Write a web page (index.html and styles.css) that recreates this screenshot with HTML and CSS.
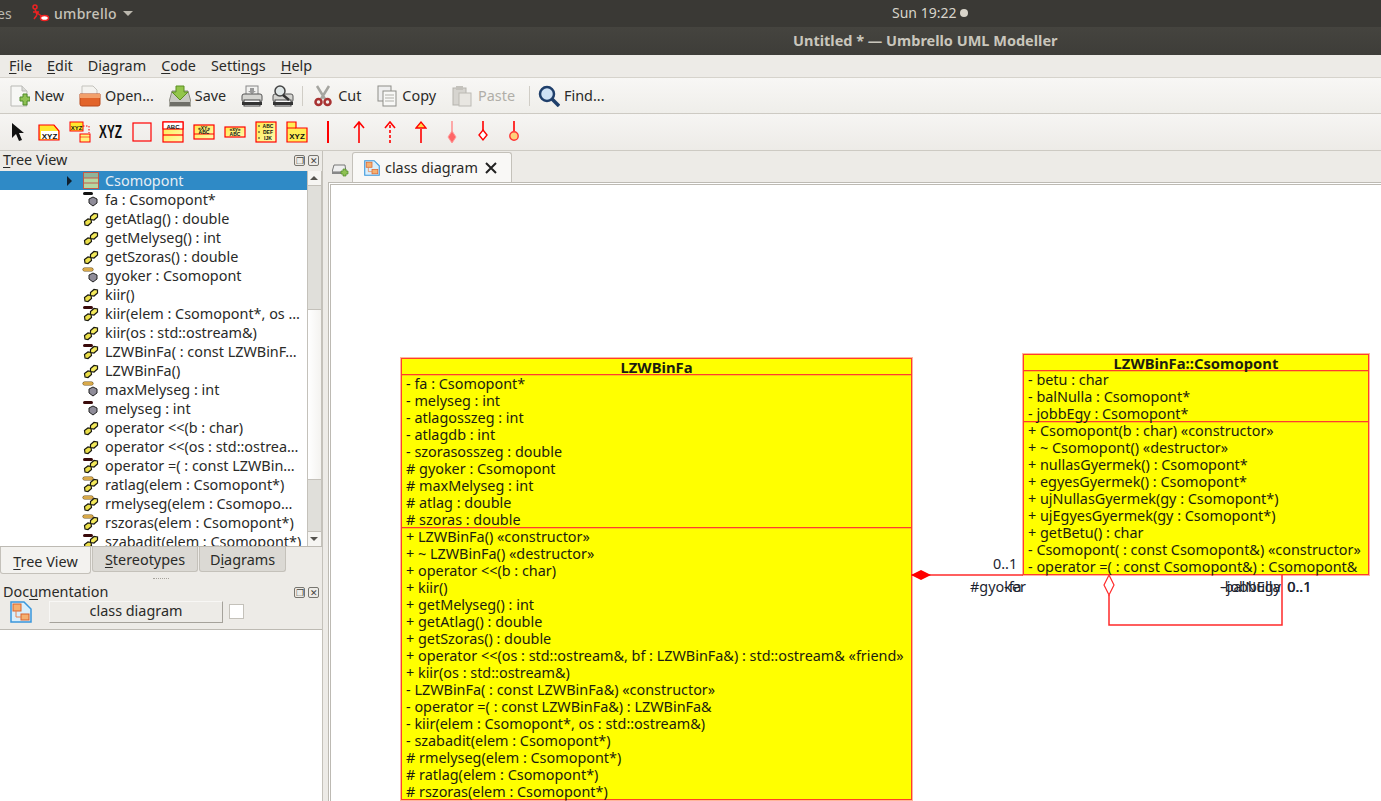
FILE: index.html
```html
<!DOCTYPE html>
<html lang="en">
<head>
  <meta charset="UTF-8" />
  <title>Untitled * — Umbrello UML Modeller</title>
  <link rel="stylesheet" href="styles.css">
</head>
<body>
  <svg class="defs" width="0" height="0">
    <defs>
      <linearGradient id="yel" x1="0" y1="0" x2="1" y2="1"><stop offset="0" stop-color="#ffe94a"/><stop offset="1" stop-color="#fffbb0"/></linearGradient>
      <symbol id="op" viewBox="0 0 16 15">
        <path d="M1.500 9.500l3.500-2.500 3 .5.500 3-3.500 3-3-.5z" fill="#ece04a" stroke="#1a1a10" stroke-width="1.200"/>
        <path d="M7.500 4.500l3.500-3 3.500.5v3l-3.500 3-3.500-.5z" fill="#f4ea5c" stroke="#1a1a10" stroke-width="1.200"/>
      </symbol>
      <symbol id="attr" viewBox="0 0 16 15">
        <path d="M10 4l4 2v4l-4 3-4-3v-4z" fill="#8f8c99" stroke="#222" stroke-width="1"/>
      </symbol>
      <symbol id="clsdiag" viewBox="0 0 22 22">
        <path d="M1 1h13l7 7v13h-20z" fill="#d9eefb" stroke="#3a97dc" stroke-width="1.500"/>
        <rect x="3" y="3" width="8" height="7" fill="#f5b070" stroke="#d9622c"/>
        <rect x="11" y="13" width="8" height="6" fill="#f5b070" stroke="#d9622c"/>
        <path d="M6 10v6h5" fill="none" stroke="#e8824c"/>
      </symbol>
    </defs>
  </svg>

  <div class="panel-top">
    <div class="panel-left">
      <span class="panel-es">es</span>
      <svg class="panel-app" width="18" height="18" viewBox="0 0 18 18"><circle cx="3" cy="3" r="2" fill="none" stroke="#e22" stroke-width="1.500"/><path d="M3 5l2 6M1 8h6M5 11l-3 4M5 9l6 4" stroke="#e22" stroke-width="1.500" fill="none"/><ellipse cx="12.500" cy="14" rx="4" ry="2.500" fill="#fff" stroke="#e22" stroke-width="1.500"/></svg>
      <span class="panel-name">umbrello</span>
      <span class="panel-caret"></span>
    </div>
    <div class="panel-clock">Sun 19:22<span class="panel-dot"></span></div>
  </div>
  <div class="titlebar">Untitled * — Umbrello UML Modeller</div>

  <div class="menubar">
    <span><u>F</u>ile</span>
    <span><u>E</u>dit</span>
    <span>Di<u>a</u>gram</span>
    <span><u>C</u>ode</span>
    <span>Setti<u>n</u>gs</span>
    <span><u>H</u>elp</span>
  </div>

  <div class="toolbar">
    <div class="tool new">
      <svg width="20" height="22" viewBox="0 0 20 22"><path d="M1 1h11l5 5v15h-16z" fill="#f7f7f5" stroke="#b9b9b5"/><path d="M12 1v5h5" fill="#dcdcd8" stroke="#b9b9b5"/><path d="M10 12h3v-3h4v3h3v4h-3v4h-4v-4h-3z" fill="#8fc253" stroke="#4f8a2a"/></svg>
      New
    </div>
    <div class="tool open">
      <svg width="22" height="22" viewBox="0 0 22 22"><path d="M3 1h11l4 4v6h-15z" fill="#f4f3ef" stroke="#c4c3bd"/><path d="M1 9h20v10q0 2-2 2h-16q-2 0-2-2z" fill="#e2642a" stroke="#b9481b"/><path d="M1 9h20v4h-20z" fill="#f2a06b"/></svg>
      Open...
    </div>
    <div class="tool save">
      <svg width="22" height="22" viewBox="0 0 22 22"><path d="M3 6h16l3 11v4h-22v-4z" fill="#c9c9c3" stroke="#88887f"/><rect x="1" y="17" width="20" height="4" fill="#6f6f68"/><path d="M7 1h8v6h4l-8 8-8-8h4z" fill="#93c54b" stroke="#5c8f22"/></svg>
      Save
    </div>
    <svg class="print" width="22" height="22" viewBox="0 0 22 22"><rect x="5" y="1" width="12" height="9" fill="#f2f2f0" stroke="#888"/><path d="M9 3h4v3h2l-4 3-4-3h2z" fill="#999"/><rect x="1" y="9" width="20" height="8" rx="2" fill="#d5d5d1" stroke="#555"/><rect x="3" y="15" width="16" height="6" fill="#fafafa" stroke="#444"/><rect x="1" y="17" width="20" height="3" fill="#333"/></svg>
    <svg class="preview" width="22" height="22" viewBox="0 0 22 22"><rect x="1" y="9" width="20" height="8" rx="2" fill="#d5d5d1" stroke="#555"/><rect x="3" y="15" width="16" height="6" fill="#fafafa" stroke="#444"/><rect x="1" y="17" width="20" height="3" fill="#333"/><circle cx="8" cy="6" r="5" fill="#dfe6e6" stroke="#444" stroke-width="1.500"/><path d="M11 10l6 5" stroke="#333" stroke-width="2.500"/></svg>
    <span class="tool-sep"></span>
    <div class="tool cut">
      <svg width="18" height="22" viewBox="0 0 18 22"><path d="M3 1l8 13M15 1l-8 13" stroke="#a5a5a0" stroke-width="2.500"/><circle cx="4.500" cy="17" r="3" fill="none" stroke="#a83232" stroke-width="2.500"/><circle cx="13.500" cy="17" r="3" fill="none" stroke="#a83232" stroke-width="2.500"/></svg>
      Cut
    </div>
    <div class="tool copy">
      <svg width="20" height="22" viewBox="0 0 20 22"><rect x="1" y="1" width="13" height="15" fill="#eee" stroke="#8d8d88"/><rect x="6" y="6" width="13" height="15" fill="#f8f8f6" stroke="#8d8d88"/><path d="M8 10h9M8 13h9M8 16h9" stroke="#b0b0aa"/></svg>
      Copy
    </div>
    <div class="tool paste">
      <svg width="20" height="22" viewBox="0 0 20 22"><rect x="1" y="3" width="13" height="17" fill="#d6d4cf" stroke="#b5b3ad"/><rect x="4" y="1" width="7" height="4" fill="#c4c2bc"/><rect x="7" y="8" width="12" height="13" fill="#e8e6e1" stroke="#bcbab4"/></svg>
      Paste
    </div>
    <span class="tool-sep sep2"></span>
    <div class="tool find">
      <svg width="22" height="22" viewBox="0 0 22 22"><circle cx="9" cy="9" r="7" fill="#cfe2f5" stroke="#1f3f6b" stroke-width="2.500"/><path d="M14 14l7 7" stroke="#1f3f6b" stroke-width="3.500"/></svg>
      Find...
    </div>
  </div>

  <div class="umlbar">
    <span class="uml"><svg width="14" height="20" viewBox="0 0 14 20"><path d="M1 1v15l4-4 3 7 3-1-3-7h5z" fill="#111"/></svg></span>
    <span class="uml"><svg width="22" height="17" viewBox="0 0 22 17"><path d="M1 1h15l5 6v9h-20z" fill="#ffe82e" stroke="#f00" stroke-width="1.200"/><rect x="3" y="7" width="17" height="8" fill="#fff"/><text x="11.500" y="14.500" class="ic-t">XYZ</text></svg></span>
    <span class="uml"><svg width="22" height="22" viewBox="0 0 22 22"><rect x="1" y="1" width="13" height="9" fill="#ffe82e" stroke="#f00"/><text x="7.500" y="8.500" class="ic-s">XYZ</text><path d="M14 5h6v7" fill="none" stroke="#f00" stroke-dasharray="1.500 1.500"/><rect x="11" y="13" width="10" height="8" fill="#fff57a" stroke="#f00"/><path d="M11 16h10" stroke="#f00" stroke-width="0.600"/></svg></span>
    <span class="uml uml-xyz">XYZ</span>
    <span class="uml"><svg width="20" height="20" viewBox="0 0 20 20"><rect x="1" y="1" width="18" height="18" fill="none" stroke="#f00" stroke-width="1.200"/></svg></span>
    <span class="uml"><svg width="22" height="22" viewBox="0 0 22 22"><rect x="1" y="1" width="20" height="20" fill="url(#yel)" stroke="#f00" stroke-width="1.200"/><rect x="1" y="1" width="20" height="7" fill="#fff" stroke="#f00" stroke-width="1.200"/><path d="M1 14h20" stroke="#f00" stroke-width="1.200"/><text x="11" y="7.500" class="ic-s">ABC</text></svg></span>
    <span class="uml"><svg width="22" height="16" viewBox="0 0 22 16"><rect x="1" y="1" width="20" height="14" fill="url(#yel)" stroke="#f00" stroke-width="1.200"/><path d="M1 10h20" stroke="#f00"/><text x="11" y="5.500" class="ic-x">«XY»</text><text x="11" y="9.500" class="ic-x">ABC</text></svg></span>
    <span class="uml"><svg width="22" height="12" viewBox="0 0 22 12"><rect x="1" y="1" width="20" height="10" fill="url(#yel)" stroke="#f00" stroke-width="1.200"/><text x="11" y="5" class="ic-x">«xy»</text><text x="11" y="10" class="ic-x">ABC</text></svg></span>
    <span class="uml"><svg width="22" height="22" viewBox="0 0 22 22"><rect x="1" y="1" width="20" height="20" fill="url(#yel)" stroke="#f00" stroke-width="1.200"/><text x="13" y="6.500" class="ic-x">ABC</text><text x="13" y="13" class="ic-x">DEF</text><text x="13" y="19" class="ic-x">IJK</text><path d="M3 5h2M3 11h2M3 17h2" stroke="#333"/></svg></span>
    <span class="uml"><svg width="22" height="22" viewBox="0 0 22 22"><path d="M1 7v-6h9v6h11v14h-20z" fill="#ffee55" stroke="#f00" stroke-width="1.200"/><path d="M1 7h9" stroke="#f00"/><text x="11" y="18" class="ic-t">XYZ</text></svg></span>
    <span class="uml"><svg width="4" height="22" viewBox="0 0 4 22"><path d="M2 0v22" stroke="#f00" stroke-width="2"/></svg></span>
    <span class="uml"><svg width="12" height="22" viewBox="0 0 12 22"><path d="M6 22v-20M1 7l5-6 5 6" fill="none" stroke="#f00" stroke-width="1.600"/></svg></span>
    <span class="uml"><svg width="12" height="22" viewBox="0 0 12 22"><path d="M6 22v-18" fill="none" stroke="#f00" stroke-width="1.600" stroke-dasharray="3 2"/><path d="M1 7l5-6 5 6" fill="none" stroke="#f00" stroke-width="1.600"/></svg></span>
    <span class="uml"><svg width="12" height="22" viewBox="0 0 12 22"><path d="M6 22v-14" stroke="#f00" stroke-width="1.600"/><path d="M1 7l5-6 5 6z" fill="#ffd84a" stroke="#f00" stroke-width="1.300"/></svg></span>
    <span class="uml"><svg width="10" height="22" viewBox="0 0 10 22"><path d="M5 0v11" stroke="#f88" stroke-width="1.400"/><path d="M5 10l4 6-4 6-4-6z" fill="#f66" stroke="#f99"/></svg></span>
    <span class="uml"><svg width="10" height="22" viewBox="0 0 10 22"><path d="M5 0v9" stroke="#f00" stroke-width="1.600"/><path d="M5 9l4 5-4 5-4-5z" fill="#fff" stroke="#f00" stroke-width="1.400"/></svg></span>
    <span class="uml"><svg width="10" height="22" viewBox="0 0 10 22"><path d="M5 0v10" stroke="#f00" stroke-width="1.600"/><circle cx="5" cy="15" r="4.200" fill="#ffd07a" stroke="#f33" stroke-width="1.400"/></svg></span>
  </div>

  <div class="main">
    <aside class="dock">
      <div class="dock-head">
        <span><u>T</u>ree View</span>
        <span class="dock-btns"><i class="dock-btn">❐</i><i class="dock-btn">✕</i></span>
      </div>
      <div class="tree-wrap">
        <ul class="tree">
          <li class="sel"><span class="arrow"></span><svg class="ti-cls" width="16" height="17" viewBox="0 0 16 17"><rect x="0.500" y="0.500" width="15" height="16" fill="#b6d8a2" stroke="#c25a4a"/><rect x="1" y="1" width="14" height="5" fill="#8fb59a"/><path d="M0 6h16M0 11h16" stroke="#c25a4a"/></svg>Csomopont</li>
          <li><b class="acc pri"></b><svg class="ti"><use href="#attr"/></svg>fa : Csomopont*</li>
          <li><svg class="ti"><use href="#op"/></svg>getAtlag() : double</li>
          <li><svg class="ti"><use href="#op"/></svg>getMelyseg() : int</li>
          <li><svg class="ti"><use href="#op"/></svg>getSzoras() : double</li>
          <li><b class="acc pro"></b><svg class="ti"><use href="#attr"/></svg>gyoker : Csomopont</li>
          <li><svg class="ti"><use href="#op"/></svg>kiir()</li>
          <li><b class="acc opri"></b><svg class="ti"><use href="#op"/></svg>kiir(elem : Csomopont*, os …</li>
          <li><svg class="ti"><use href="#op"/></svg>kiir(os : std::ostream&amp;)</li>
          <li><b class="acc opri"></b><svg class="ti"><use href="#op"/></svg>LZWBinFa( : const LZWBinF…</li>
          <li><svg class="ti"><use href="#op"/></svg>LZWBinFa()</li>
          <li><b class="acc pro"></b><svg class="ti"><use href="#attr"/></svg>maxMelyseg : int</li>
          <li><b class="acc opri"></b><svg class="ti"><use href="#attr"/></svg>melyseg : int</li>
          <li><svg class="ti"><use href="#op"/></svg>operator &lt;&lt;(b : char)</li>
          <li><svg class="ti"><use href="#op"/></svg>operator &lt;&lt;(os : std::ostrea…</li>
          <li><b class="acc opri"></b><svg class="ti"><use href="#op"/></svg>operator =( : const LZWBin…</li>
          <li><b class="acc pro"></b><svg class="ti"><use href="#op"/></svg>ratlag(elem : Csomopont*)</li>
          <li><b class="acc pro"></b><svg class="ti"><use href="#op"/></svg>rmelyseg(elem : Csomopo…</li>
          <li><b class="acc pro"></b><svg class="ti"><use href="#op"/></svg>rszoras(elem : Csomopont*)</li>
          <li><b class="acc opri"></b><svg class="ti"><use href="#op"/></svg>szabadit(elem : Csomopont*)</li>
        </ul>
        <div class="vscroll">
          <span class="sb-btn up"></span>
          <span class="sb-thumb"></span>
          <span class="sb-trough"></span>
          <span class="sb-rest"></span>
          <span class="sb-btn down"></span>
        </div>
      </div>
      <div class="dock-tabs">
        <span class="dock-tab on"><u>T</u>ree View</span>
        <span class="dock-tab st"><u>S</u>tereotypes</span>
        <span class="dock-tab dg">D<u>i</u>agrams</span>
      </div>
      <div class="grip"></div>
      <div class="dock-head doc-head">
        <span>Doc<u>u</u>mentation</span>
        <span class="dock-btns"><i class="dock-btn">❐</i><i class="dock-btn">✕</i></span>
      </div>
      <div class="doc-row">
        <svg width="22" height="22"><use href="#clsdiag"/></svg>
        <span class="doc-btn">class diagram</span>
        <span class="doc-check"></span>
      </div>
      <div class="doc-text"></div>
    </aside>

    <section class="work">
      <div class="tabbar">
        <svg class="tab-add" width="18" height="14" viewBox="0 0 18 14"><path d="M2 1h11l1 7h-14z" fill="#eee" stroke="#777"/><rect x="0" y="8" width="14" height="2" fill="#888"/><path d="M9 7h2v-2h3v2h2v3h-2v2h-3v-2h-2z" fill="#8fc253" stroke="#4f8a2a" stroke-width="0.700"/></svg>
        <div class="tab">
          <svg width="16" height="16" viewBox="0 0 22 22"><use href="#clsdiag"/></svg>
          <span>class dia<u>g</u>ram</span>
          <svg class="tab-x" width="12" height="12" viewBox="0 0 12 12"><path d="M1 1l10 10M11 1l-10 10" stroke="#222" stroke-width="2"/></svg>
        </div>
      </div>
      <div class="canvas">
        <div class="uml-class c-tree">
          <h4>LZWBinFa</h4>
          <div class="sect">
            <p>- fa : Csomopont*</p>
            <p>- melyseg : int</p>
            <p>- atlagosszeg : int</p>
            <p>- atlagdb : int</p>
            <p>- szorasosszeg : double</p>
            <p># gyoker : Csomopont</p>
            <p># maxMelyseg : int</p>
            <p># atlag : double</p>
            <p># szoras : double</p>
          </div>
          <div class="sect">
            <p>+ LZWBinFa() «constructor»</p>
            <p>+ ~ LZWBinFa() «destructor»</p>
            <p>+ operator &lt;&lt;(b : char)</p>
            <p>+ kiir()</p>
            <p>+ getMelyseg() : int</p>
            <p>+ getAtlag() : double</p>
            <p>+ getSzoras() : double</p>
            <p>+ operator &lt;&lt;(os : std::ostream&amp;, bf : LZWBinFa&amp;) : std::ostream&amp; «friend»</p>
            <p>+ kiir(os : std::ostream&amp;)</p>
            <p>- LZWBinFa( : const LZWBinFa&amp;) «constructor»</p>
            <p>- operator =( : const LZWBinFa&amp;) : LZWBinFa&amp;</p>
            <p>- kiir(elem : Csomopont*, os : std::ostream&amp;)</p>
            <p>- szabadit(elem : Csomopont*)</p>
            <p># rmelyseg(elem : Csomopont*)</p>
            <p># ratlag(elem : Csomopont*)</p>
            <p># rszoras(elem : Csomopont*)</p>
          </div>
        </div>

        <div class="uml-class c-node">
          <h4>LZWBinFa::Csomopont</h4>
          <div class="sect">
            <p>- betu : char</p>
            <p>- balNulla : Csomopont*</p>
            <p>- jobbEgy : Csomopont*</p>
          </div>
          <div class="sect">
            <p>+ Csomopont(b : char) «constructor»</p>
            <p>+ ~ Csomopont() «destructor»</p>
            <p>+ nullasGyermek() : Csomopont*</p>
            <p>+ egyesGyermek() : Csomopont*</p>
            <p>+ ujNullasGyermek(gy : Csomopont*)</p>
            <p>+ ujEgyesGyermek(gy : Csomopont*)</p>
            <p>+ getBetu() : char</p>
            <p>- Csomopont( : const Csomopont&amp;) «constructor»</p>
            <p>- operator =( : const Csomopont&amp;) : Csomopont&amp;</p>
          </div>
        </div>

        <svg class="wires" width="1050" height="616" viewBox="331 185 1050 616">
          <path d="M911 575h112" stroke="#ff2a2a" stroke-width="1.500" fill="none"/>
          <path d="M911 575l10-5 10 5-10 5z" fill="#ff0000"/>
          <path d="M1109 595v30h173v-50" stroke="#ff2a2a" stroke-width="1.500" fill="none"/>
          <path d="M1109 575l5 10-5 10-5-10z" fill="#fff" stroke="#ff2a2a" stroke-width="1.200"/>
        </svg>

        <span class="lbl l-mult1">0..1</span>
        <span class="lbl l-gy">#gyoker</span>
        <span class="lbl l-fa">-fa</span>
        <span class="lbl l-bal">-balNulla</span>
        <span class="lbl l-job">-jobbEgy</span>
        <span class="lbl l-m2">0..1</span>
        <span class="lbl l-m3">0..1</span>
      </div>
    </section>
  </div>
</body>
</html>
```

FILE: styles.css
```css
* {
  box-sizing: border-box;
}
html, body {
  margin: 0;
  height: 801px;
  overflow: hidden;
}
body {
  background: #edebe7;
  color: #2a2a28;
  font-family: "Noto Sans", "Open Sans", sans-serif;
  font-size: 14.400px;
  width: 1381px;
}
u {
  text-underline-offset: 2px;
}
.defs {
  position: absolute;
}

/* ubuntu panel + title */
.panel-top {
  height: 27px;
  background: #3a3935;
  color: #d8d4ca;
  display: flex;
  align-items: center;
  position: relative;
  font-size: 14px;
  padding-bottom: 1px;
}
.panel-left {
  display: flex;
  align-items: center;
}
.panel-es {
  width: 29px;
  margin-left: -3px;
  margin-right: 6px;
  color: #bdbab0;
}
.panel-app {
  margin-right: 4px;
}
.panel-name {
  font-weight: 500;
  letter-spacing: 0.3px;
  color: #c6c3b9;
}
.panel-caret {
  margin-left: 6px;
  border-left: 5px solid transparent;
  border-right: 5px solid transparent;
  border-top: 5px solid #bbb8ae;
}
.panel-clock {
  position: absolute;
  left: 892px;
  top: 3px;
  display: flex;
  align-items: center;
}
.panel-dot {
  width: 8px;
  height: 8px;
  border-radius: 50%;
  background: #d8d4ca;
  margin-left: 4px;
}
.titlebar {
  height: 28px;
  background: linear-gradient(#45443f, #3e3d39);
  color: #c9c6bc;
  font-weight: 700;
  font-size: 14.500px;
  padding: 3px 0 0 793px;
}

.menubar {
  height: 22px;
  background: #edebe7;
  display: flex;
  gap: 15px;
  padding: 0 0 0 9px;
  align-items: center;
  line-height: 22px;
}
.toolbar {
  height: 37px;
  background: linear-gradient(#f8f7f5, #efeeea);
  border-top: 1px solid #d6d3cc;
  border-bottom: 1px solid #cdcac3;
  display: flex;
  align-items: center;
  padding-left: 10px;
}
.tool {
  display: flex;
  align-items: center;
  gap: 4px;
}
.open { margin-left: 15px; }
.save { margin-left: 15px; }
.print { margin-left: 15px; }
.preview { margin-left: 9px; }
.tool-sep {
  width: 1px;
  height: 20px;
  background: #d0cdc6;
  margin-left: 8px;
}
.cut { margin-left: 11px; gap: 6px; }
.copy { margin-left: 16px; gap: 5px; }
.paste { margin-left: 16px; gap: 6px; color: #b0aea8; }
.sep2 { margin-left: 14px; }
.find { margin-left: 8px; }

.umlbar {
  height: 37px;
  background: linear-gradient(#f6f5f3, #edebe7);
  border-bottom: 1px solid #cdcac3;
  display: flex;
  align-items: center;
  padding-left: 2px;
}
.uml {
  width: 31px;
  height: 24px;
  display: flex;
  align-items: center;
  justify-content: center;
}
.uml-xyz {
  font-family: "Liberation Sans", sans-serif;
  font-weight: 700;
  font-size: 19px;
  color: #111;
  transform: scaleX(0.62);
}
.ic-t, .ic-s, .ic-x {
  font-family: "Liberation Sans", sans-serif;
  font-weight: 700;
  text-anchor: middle;
  fill: #111;
}
.ic-t { font-size: 8px; }
.ic-s { font-size: 6px; }
.ic-x { font-size: 5px; }

.main {
  display: flex;
  height: 650px;
}
.dock {
  width: 323px;
  flex: none;
  border-right: 1px solid #c4c1ba;
  display: flex;
  flex-direction: column;
}
.dock-head {
  height: 20px;
  padding: 0 3px 2px;
  display: flex;
  justify-content: space-between;
  align-items: center;
  line-height: 16px;
}
.dock-btns {
  display: flex;
  gap: 3px;
}
.dock-btn {
  width: 11px;
  height: 11px;
  border: 1px solid #77756f;
  border-radius: 2px;
  font-style: normal;
  font-size: 9px;
  line-height: 9px;
  text-align: center;
  color: #45433e;
}
.tree-wrap {
  height: 376px;
  display: flex;
  background: #fff;
  border-bottom: 1px solid #bdbab3;
  overflow: hidden;
}
.tree {
  flex: 1;
  list-style: none;
  margin: 0;
  padding: 0;
  overflow: hidden;
}
.tree li {
  height: 19px;
  line-height: 19px;
  padding-left: 105px;
  position: relative;
  white-space: nowrap;
}
.tree .sel {
  background: #2f8ac6;
  color: #e6eef4;
}
.ti {
  position: absolute;
  left: 83px;
  top: 3px;
  width: 16px;
  height: 15px;
}
.ti-cls {
  position: absolute;
  left: 83px;
  top: 1px;
}
.acc {
  position: absolute;
  left: 83px;
  top: 2px;
  width: 10px;
  height: 3px;
  border-radius: 2px;
}
.pri { background: #111; }
.pro { background: #d8a94a; box-shadow: 0 0 0 0.500px #6b5320; }
.opri { background: #3a0a0a; }
.arrow {
  position: absolute;
  left: 67px;
  top: 5px;
  border-top: 5px solid transparent;
  border-bottom: 5px solid transparent;
  border-left: 5px solid #10202e;
}
.vscroll {
  width: 15px;
  flex: none;
  background: #fbfaf8;
  border-left: 1px solid #c4c1ba;
  border-right: 1px solid #c4c1ba;
  display: flex;
  flex-direction: column;
}
.sb-btn {
  height: 14px;
  background: #f6f5f2;
  position: relative;
  flex: none;
}
.sb-btn::after {
  content: "";
  position: absolute;
  left: 2px;
  top: 5px;
  border-left: 4px solid transparent;
  border-right: 4px solid transparent;
}
.up::after { border-bottom: 4px solid #55534e; }
.down::after { border-top: 4px solid #55534e; }
.sb-thumb {
  height: 125px;
  flex: none;
  background: #e0dfda;
  border-top: 1px solid #c4c1ba;
  border-bottom: 1px solid #c4c1ba;
}
.sb-trough {
  height: 169px;
  flex: none;
  background: linear-gradient(to right, #fff, #f4f3f0);
}
.sb-rest {
  flex: 1;
  background: #e0dfda;
  border-top: 1px solid #c4c1ba;
  border-bottom: 1px solid #c4c1ba;
}
.dock-tabs {
  height: 26px;
  display: flex;
}
.dock-tab {
  background: #dbd9d4;
  border: 1px solid #c4c1ba;
  border-top: 0;
  border-radius: 0 0 3px 3px;
  height: 25px;
  line-height: 26px;
  text-align: center;
  margin-right: 1px;
}
.dock-tab.on {
  background: #f3f2ef;
  width: 91px;
  height: 27px;
  line-height: 29px;
}
.st { width: 106px; }
.dg { width: 87px; }
.grip {
  height: 5px;
  margin: 5px auto 0;
  width: 16px;
  border-top: 1px dotted #a5a29b;
}
.doc-head {
  height: 18px;
  padding-bottom: 0;
}
.doc-row {
  display: flex;
  align-items: flex-start;
  height: 24px;
  padding-left: 10px;
}
.doc-btn {
  margin-left: 17px;
  width: 174px;
  height: 22px;
  line-height: 18px;
  text-align: center;
  background: #edebe7;
  border: 1px solid #f8f7f5;
  border-right-color: #a5a29b;
  border-bottom-color: #a5a29b;
}
.doc-check {
  margin: 3px 0 0 6px;
  width: 15px;
  height: 15px;
  background: #fff;
  border: 1px solid #c4c1ba;
}
.doc-text {
  flex: 1;
  margin-top: 4px;
  background: #fff;
  border-top: 1px solid #bdbab3;
}

.work {
  flex: 1;
  display: flex;
  flex-direction: column;
  padding-left: 5px;
}
.tabbar {
  height: 31px;
  display: flex;
  align-items: flex-end;
}
.tab-add {
  margin: 0 2px 4px 4px;
}
.tab {
  width: 160px;
  height: 30px;
  background: #f9f8f6;
  border: 1px solid #c4c1ba;
  border-bottom: 0;
  border-radius: 3px 3px 0 0;
  display: flex;
  align-items: center;
  padding-left: 11px;
  gap: 5px;
}
.tab-x {
  margin-left: 2px;
}
.canvas {
  flex: 1;
  background: #fff;
  border-left: 3px double #bdbab3;
  border-top: 3px double #bdbab3;
  position: relative;
  overflow: hidden;
}

/* diagram items, canvas origin is 331,185 */
.uml-class {
  position: absolute;
  background: #ffff00;
  border: 1px solid #ff3d2e;
  outline: 1px solid rgba(255, 120, 70, 0.55);
  color: #1c1c10;
  line-height: 17px;
  white-space: nowrap;
}
.uml-class h4 {
  margin: 0;
  text-align: center;
  font-size: 14.800px;
  font-weight: 700;
  line-height: 16px;
  height: 16px;
}
.uml-class p {
  margin: 0;
  padding-left: 4px;
  height: 17px;
}
.sect {
  border-top: 1px solid #ff3d2e;
  margin-top: -1px;
  box-shadow: inset 0 1px 0 rgba(255, 140, 40, 0.5);
}
.c-tree {
  left: 70px;
  top: 173px;
  width: 511px;
  height: 442px;
}
.c-node {
  left: 692px;
  top: 169px;
  width: 346px;
  height: 221px;
}
.wires {
  position: absolute;
  left: 0;
  top: 0;
}
.lbl {
  position: absolute;
  color: #1c2430;
  line-height: 18px;
}
.l-mult1 { left: 662px; top: 370px; }
.l-gy { left: 639px; top: 393px; }
.l-fa { left: 673px; top: 393px; }
.l-bal { left: 889px; top: 393px; }
.l-job { left: 891px; top: 393px; }
.l-m2 { left: 956px; top: 393px; }
.l-m3 { left: 956.500px; top: 393px; }
```
